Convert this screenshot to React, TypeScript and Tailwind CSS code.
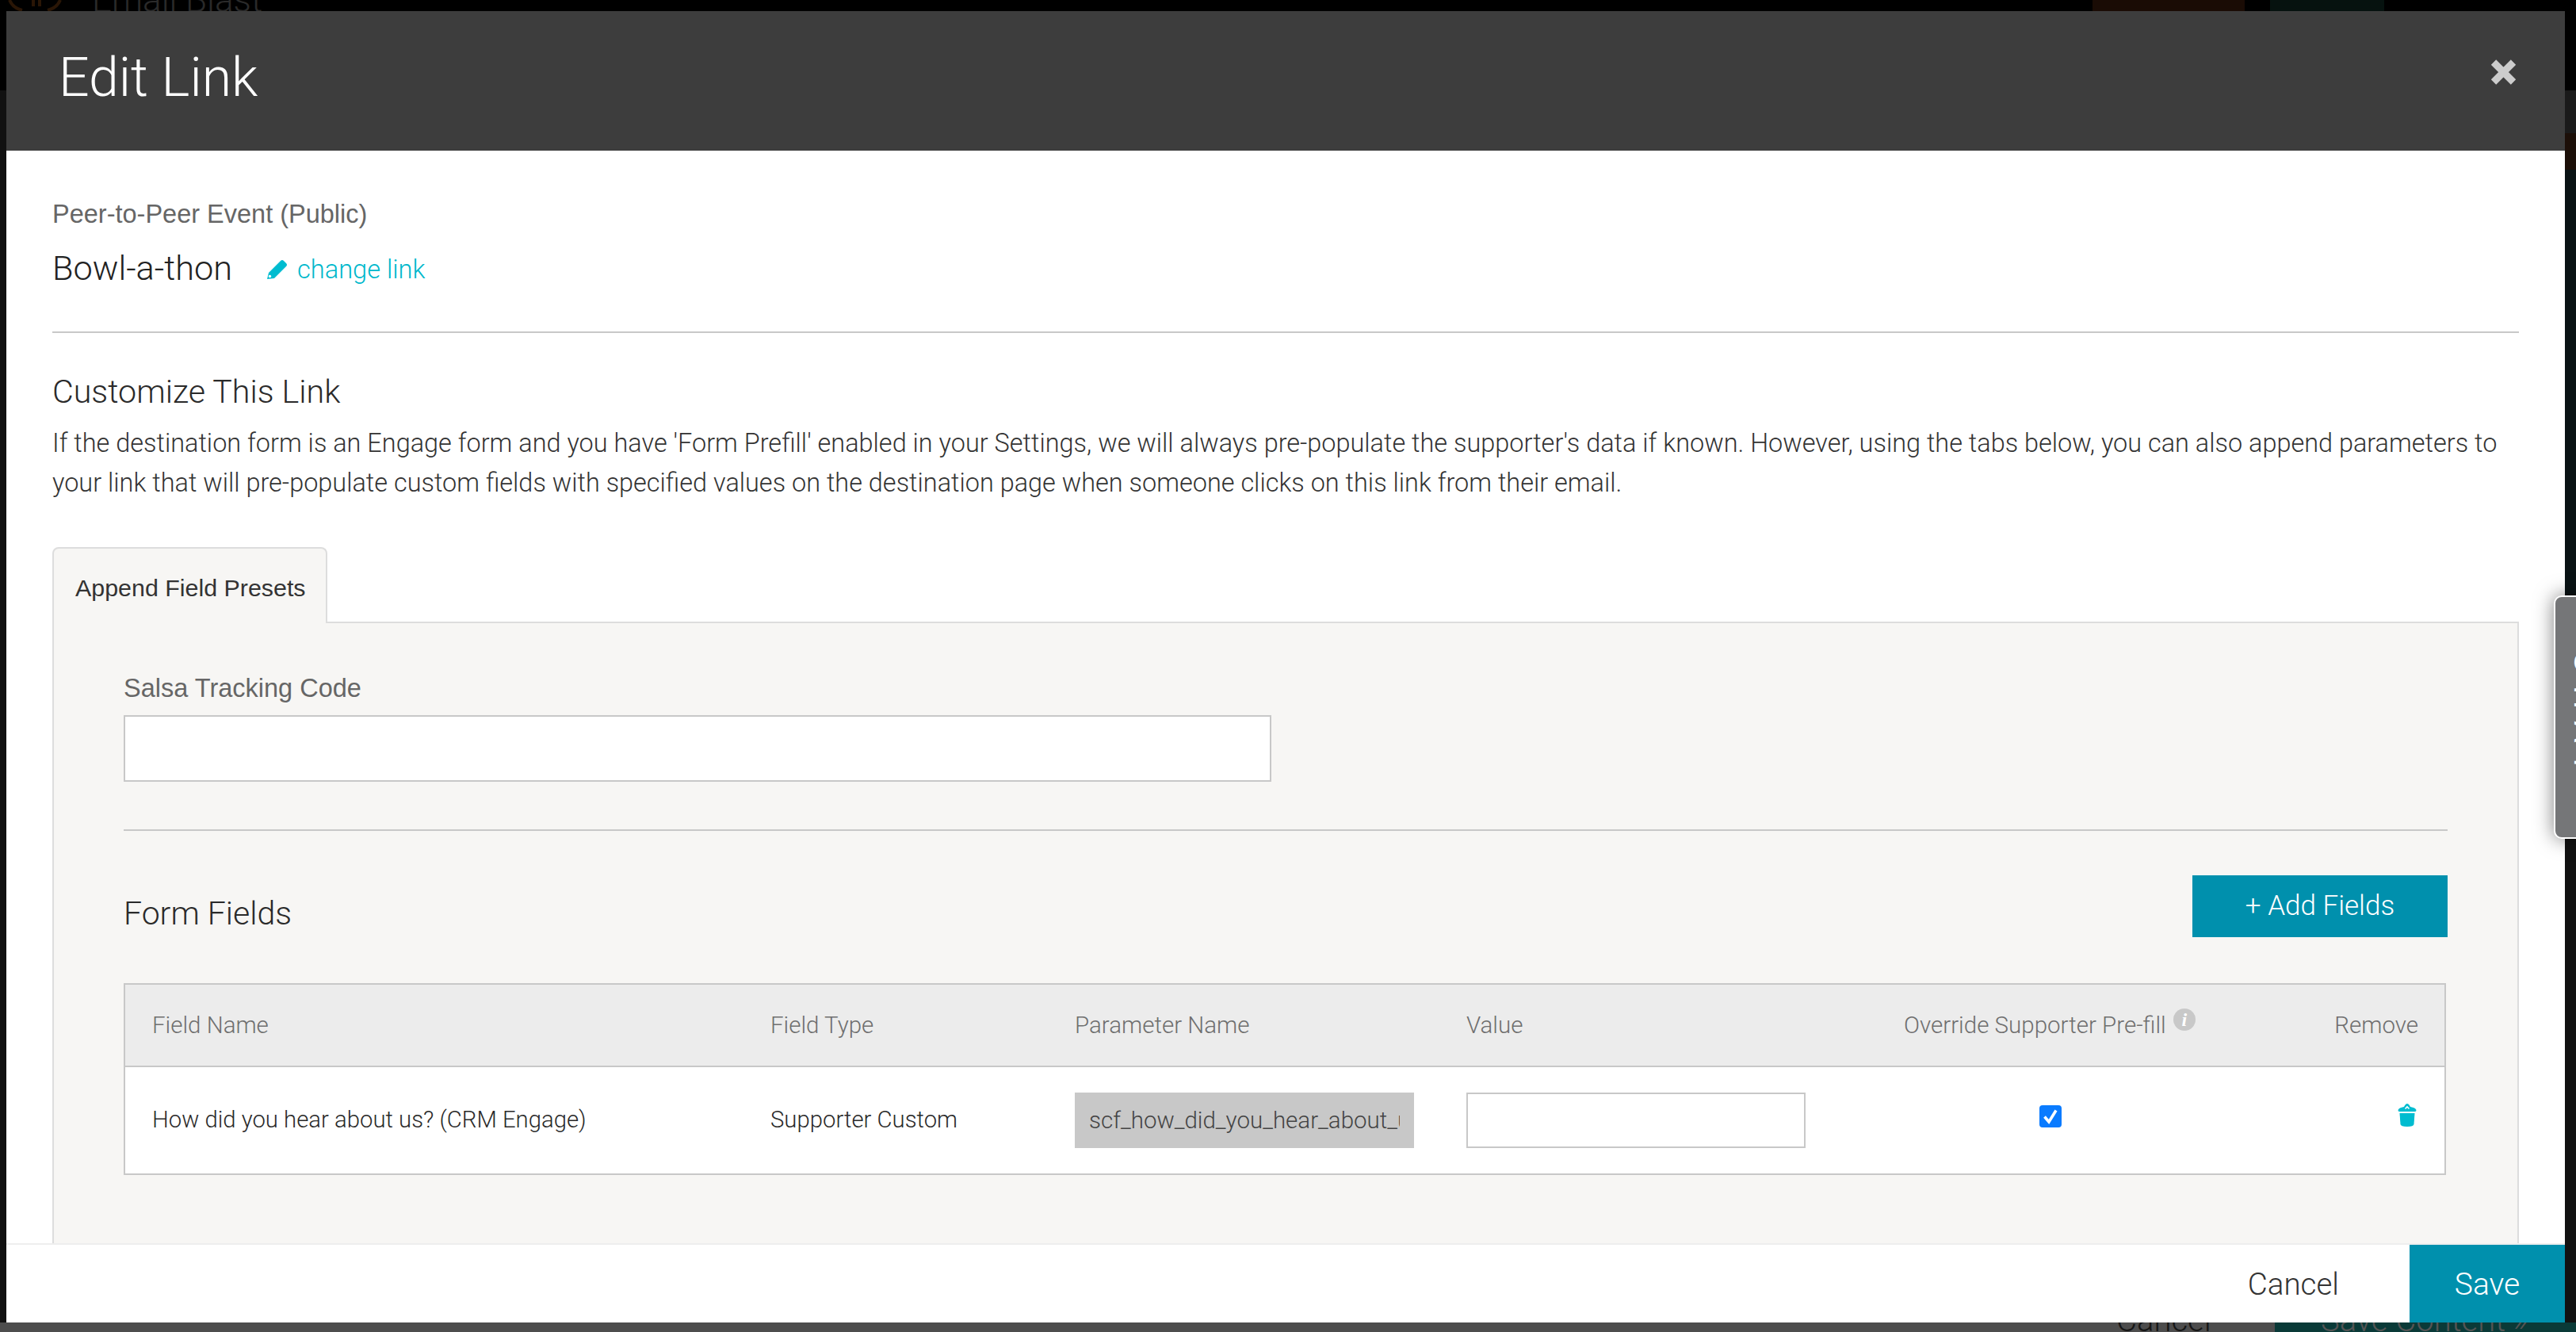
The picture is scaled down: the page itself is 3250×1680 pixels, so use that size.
import React from "react";

const roboto = "font-['Roboto',sans-serif] font-light";
const arial = "font-['Liberation_Sans',Arial,sans-serif]";

function Backdrop() {
  return (
    <>
      <div className="absolute left-0 right-0 top-0 h-[114px] bg-black" />
      <svg width="80" height="14" viewBox="0 0 80 14" className="absolute left-[6px] top-0">
        <path d="M6 0 Q10 10 22 13 M70 0 Q66 10 54 13 M36 0 L36 8 M44 0 L44 8" fill="none" stroke="#2a1606" strokeWidth="4" />
      </svg>
      <div className={`absolute left-[116px] top-[-24px] text-[44px] leading-[48px] text-[#2a2a2a] ${roboto}`}>Email Blast</div>
      <div className="absolute left-[2640px] top-0 h-[14px] w-[192px] bg-[#1a0c05]" />
      <div className="absolute left-[2864px] top-0 h-[14px] w-[144px] bg-[#06120f]" />
      <div className="absolute left-[3236px] top-[114px] h-[54px] w-[14px] bg-[#1a1a1a]" />
      <div className="absolute left-[3236px] top-[168px] h-[46px] w-[14px] bg-[#1c0f08]" />
      <div className="absolute left-[3236px] top-[214px] h-[540px] w-[14px] bg-[#091214]" />
      <div className="absolute bottom-0 left-0 h-[12px] w-[2870px] bg-[#4d4d4d]" />
      <div className="absolute bottom-0 left-[2870px] h-[12px] w-[380px] bg-[#0a3a38]" />
      <div className={`absolute left-[2670px] top-[1642px] text-[40px] leading-[48px] text-[#161616] ${roboto}`}>Cancel</div>
      <div className={`absolute left-[2928px] top-[1642px] text-[40px] leading-[48px] text-[#555] ${roboto}`}>Save Content »</div>
    </>
  );
}

function Pencil() {
  return (
    <svg width="26" height="25" viewBox="0 0 26 25" className="mr-[12px] shrink-0">
      <path d="M0 25 L2 17 L17 2 Q19 0 21 2 L24 5 Q26 7 24 9 L9 24 Z" fill="#00bcd0" />
      <circle cx="3.5" cy="21.5" r="1.7" fill="#fff" />
    </svg>
  );
}

function Trash() {
  return (
    <svg width="24" height="29" viewBox="0 0 24 29">
      <path d="M0.5 8 Q1.5 5 8 4 Q10 0 12 0 Q14 0 16 4 Q22.5 5 23.5 8 Q23.5 10 22 10 L2 10 Q0.5 10 0.5 8Z" fill="#00bcd0" />
      <path d="M9.5 6.5 L12 4 L14.5 6.5" fill="none" stroke="#fff" strokeWidth="1.6" />
      <path d="M2.5 12 L21.5 12 L20.5 26 Q20 29 12 29 Q4 29 3.5 26Z" fill="#00bcd0" />
    </svg>
  );
}

function Check() {
  return (
    <div className="flex h-[28px] w-[28px] items-center justify-center rounded-[4px] bg-[#0a7bff]">
      <svg width="22" height="22" viewBox="0 0 22 22">
        <path d="M3.5 11.5 L9 18 L18 3.5" fill="none" stroke="#fff" strokeWidth="3.6" />
      </svg>
    </div>
  );
}

const headCell = `text-[29.5px] text-[#6f6f6f] ${roboto}`;
const rowCell = `text-[29.3px] text-[#2a2a2a] ${roboto}`;
const cols = "grid grid-cols-[780px_384px_494px_552px_370px_1fr] items-center pl-[34px] pr-[33px]";

export default function App() {
  return (
    <div className="relative h-[1680px] w-full overflow-hidden bg-[#111]">
      <Backdrop />
      <div className="relative flex h-[1680px] pb-[12px] pl-[8px] pr-[14px] pt-[14px]">
        <div className="flex h-[1654px] w-[3228px] flex-col overflow-hidden bg-white">
          <header className="flex h-[176px] shrink-0 items-center justify-between bg-[#3d3d3d] pb-[8px] pl-[66px] pr-[61px]">
            <h1 className={`text-[68px] leading-none text-white ${roboto}`}>Edit Link</h1>
            <svg width="33" height="34" viewBox="0 0 33 34" className="mb-[14px]">
              <path d="M4 4.5 L29 29.5 M29 4.5 L4 29.5" stroke="#ccc" strokeWidth="9" />
            </svg>
          </header>

          <main className="min-h-0 flex-1 overflow-hidden px-[58px] pt-[60px]">
            <p className={`text-[32.5px] leading-[40px] text-[#666] ${arial}`}>Peer-to-Peer Event (Public)</p>
            <div className="mt-[20px] flex h-[60px] items-center">
              <span className={`mt-[-2px] text-[43.3px] text-[#222] ${roboto}`}>Bowl-a-thon</span>
              <span className={`ml-[44px] flex items-center text-[32.6px] text-[#00b8cc] ${roboto}`}>
                <Pencil />
                change link
              </span>
            </div>
            <hr className="mt-[48px] h-[2px] border-0 bg-[#c8c8c8]" />
            <h2 className={`mt-[46px] text-[41.2px] leading-[56px] text-[#2a2a2a] ${roboto}`}>Customize This Link</h2>
            <p className={`mt-[12px] text-[32.45px] leading-[50px] text-[#333] ${roboto}`}>
              If the destination form is an Engage form and you have 'Form Prefill' enabled in your Settings, we will always pre-populate the supporter's data if known. However, using the tabs below, you can also append parameters to your link that will pre-populate custom fields with specified values on the destination page when someone clicks on this link from their email.
            </p>

            <div className={`relative z-10 mb-[-2px] mt-[56px] flex h-[96px] w-[347px] items-center rounded-t-[8px] border-2 border-b-0 border-[#ddd] bg-[#f7f6f4] pl-[27px] pt-[6px] text-[30.4px] text-[#333] ${arial}`}>
              Append Field Presets
            </div>
            <section className="h-[800px] border-2 border-[#ddd] bg-[#f7f6f4] px-[88px] pt-[62px]">
              <label className={`block text-[32.5px] leading-[40px] text-[#666] ${arial}`}>Salsa Tracking Code</label>
              <div className="mt-[14px] h-[84px] w-[1448px] border-2 border-[#c8c8c8] bg-white" />
              <hr className="mt-[60px] h-[2px] border-0 bg-[#c8c8c8]" />
              <div className="mt-[56px] flex h-[78px] items-center justify-between">
                <h3 className={`mt-[20px] text-[41px] text-[#2a2a2a] ${roboto}`}>Form Fields</h3>
                <button className={`h-[78px] w-[322px] bg-[#0090ad] text-[35px] text-white ${roboto}`}>+ Add Fields</button>
              </div>
              <div className="mt-[58px] w-[2930px] border-2 border-[#c8c8c8] bg-white">
                <div className={`${cols} h-[104px] border-b-2 border-[#c8c8c8] bg-[#ececec]`}>
                  <div className={headCell}>Field Name</div>
                  <div className={headCell}>Field Type</div>
                  <div className={headCell}>Parameter Name</div>
                  <div className={headCell}>Value</div>
                  <div className={`${headCell} flex items-center whitespace-nowrap`}>
                    Override Supporter Pre-fill
                    <span className="ml-[9px] mt-[-14px] flex h-[28px] w-[28px] shrink-0 items-center justify-center rounded-full bg-[#c8c8c8] font-['Liberation_Serif',serif] text-[24px] font-bold italic text-white">i</span>
                  </div>
                  <div className={`${headCell} text-right`}>Remove</div>
                </div>
                <div className={`${cols} h-[134px]`}>
                  <div className={rowCell}>How did you hear about us? (CRM Engage)</div>
                  <div className={rowCell}>Supporter Custom</div>
                  <div>
                    <input readOnly value="scf_how_did_you_hear_about_us" className={`block h-[70px] w-[428px] bg-[#c8c8c8] px-[18px] text-[29.5px] text-[#444] outline-none ${roboto}`} />
                  </div>
                  <div>
                    <div className="h-[70px] w-[428px] border-2 border-[#c8c8c8] bg-white" />
                  </div>
                  <div className="mb-[10px] flex justify-center"><Check /></div>
                  <div className="mb-[13px] flex justify-end pr-[2px]"><Trash /></div>
                </div>
              </div>
            </section>
          </main>

          <footer className="relative z-10 flex h-[100px] shrink-0 justify-end border-t-2 border-[#eee] bg-white">
            <button className={`pr-[89px] pt-[2px] text-[38.5px] text-[#333] ${roboto}`}>Cancel</button>
            <button className={`w-[196px] bg-[#0090ad] pt-[2px] text-[39px] text-white ${roboto}`}>Save</button>
          </footer>
        </div>
      </div>

      <div className="absolute left-[3222px] top-[751px] flex h-[307px] w-[80px] items-center rounded-l-[10px] border-2 border-white bg-[#757678] pl-[18px] shadow-[0_0_24px_rgba(0,0,0,0.5)]">
        <span className={`text-[40px] leading-none tracking-[16px] text-white [writing-mode:vertical-rl] ${arial}`}>CHAT</span>
      </div>
    </div>
  );
}
